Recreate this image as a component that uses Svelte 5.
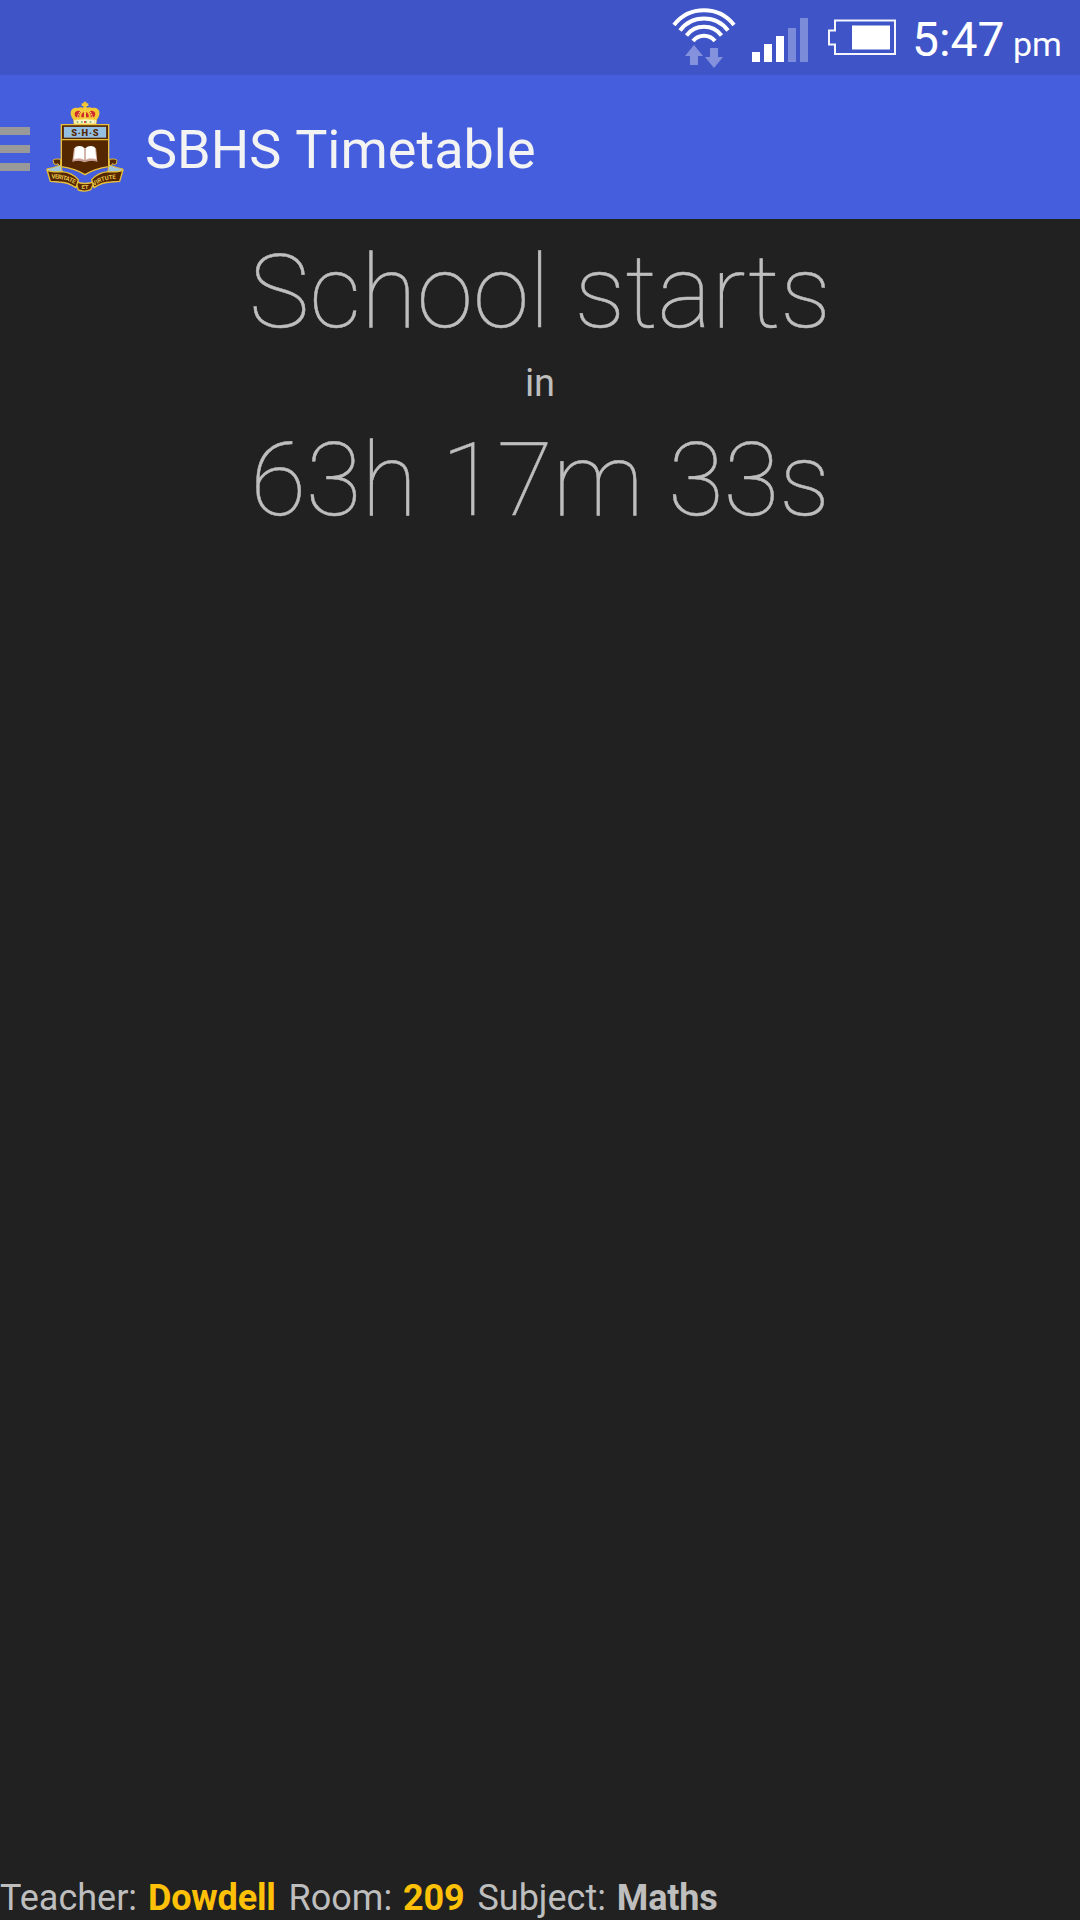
<script>
  const signal = [10, 18, 26, 34, 44];
  const details = [
    { label: 'Teacher', value: 'Dowdell', changed: true },
    { label: 'Room', value: '209', changed: true },
    { label: 'Subject', value: 'Maths', changed: false }
  ];
</script>

<div class="screen">
  <div class="status">
    <svg class="wifi" width="64" height="64" viewBox="672 6 64 64">
      <g fill="none" stroke="#fff" stroke-width="4">
        <path d="M674 25A38 38 0 0 1 734 25" />
        <path d="M680 30.500A30 30 0 0 1 728 30.500" />
        <path d="M686.500 35.500A22 22 0 0 1 721.500 35.500" />
        <path d="M693 41A14 14 0 0 1 715 41" />
      </g>
      <path fill="#8491dd" d="M694 45L703 56H698V65H690V56H685ZM710 48H718V57H723L714 68L705 57H710Z" />
    </svg>
    <svg class="signal" width="56" height="44" viewBox="0 0 56 44">
      {#each signal as h, i}
        <rect x={i * 12} y={44 - h} width="8" height={h} fill={i < 3 ? '#fff' : '#7b8bda'} />
      {/each}
    </svg>
    <svg class="battery" width="68" height="36" viewBox="828 19 68 36">
      <path fill="none" stroke="#f4f5fd" stroke-width="2" d="M835 20.500H895V54H835V44.500H829V30.500H835Z" />
      <rect x="852" y="25.500" width="38" height="24" fill="#fff" />
    </svg>
    <span class="clock">5:47</span><span class="ampm">pm</span>
  </div>

  <header>
    <div class="menu"><i></i><i></i><i></i></div>
    <svg class="crest" width="80" height="94" viewBox="135 30 240 282">
      <!-- crown -->
      <path fill="#f3c832" d="M224 94C203 72 212 50 233 54Q242 50 249 53L251 48H245V40H251V35H259V40H265V48H259L261 53Q268 50 277 54C299 50 307 72 287 94Z" />
      <path fill="#cf2a2b" d="M228 82C220 71 225 62 236 62L243 65Q236 74 238 82ZM282 82C290 71 285 62 274 62L267 65Q274 74 272 82ZM244 82Q242 72 252 66V82ZM266 82Q268 72 258 66V82Z" />
      <path fill="none" stroke="#fbe07a" stroke-width="4" stroke-dasharray="3 3" d="M233 86Q231 71 247 60M277 86Q279 71 263 60M255 56V86" />
      <path fill="#fff4c3" stroke="#f3c832" stroke-width="2" d="M221 90Q255 83 290 90L288 102H222Z" />
      <path fill="none" stroke="#5fa868" stroke-width="4" stroke-dasharray="5 8" d="M230 96H283" />
      <circle cx="255" cy="96" r="3" fill="#d42b31" />
      <!-- ribbon curls -->
      <g stroke="#e5bd34" stroke-width="3">
        <path fill="#552700" d="M159 211Q164 205 182 208V238L174 221Q168 226 162 221ZM351 211Q346 205 328 208V238L337 221Q343 226 349 221Z" />
        <path fill="#9fc6df" d="M183 225L158 233L140 237L145 246L187 247ZM327 225L352 233L369 237L364 246L323 247Z" />
      </g>
      <!-- shield -->
      <path fill="#552700" stroke="#eac13a" stroke-width="4" d="M184 104H326V230Q284 236 255 254Q226 236 184 230Z" />
      <rect x="191" y="110" width="128" height="34" fill="#94c0e4" stroke="#552700" stroke-width="2" />
      <path stroke="#eac13a" stroke-width="4" d="M184 149H326" />
      <text class="initials" x="254.500" y="137.500" text-anchor="middle" textLength="82">S·H·S</text>
      <!-- open book -->
      <path fill="#d9b6ab" d="M222 174L217 215Q240 209 254 217Q270 209 292 215L288 174Z" />
      <path fill="#fff" d="M226 171Q244 164 253 174V209Q239 202 222 207ZM257 174Q267 164 284 171L289 207Q269 202 257 209Z" />
      <path fill="none" stroke="#a98274" stroke-width="2" d="M255 175V213M219 212Q240 206 254 214Q268 206 290 212" />
      <!-- motto ribbon -->
      <g fill="#552700" stroke="#e8bf39" stroke-width="4" stroke-linejoin="round">
        <path d="M227 275Q255 286 283 275L272 299Q255 307 235 300Z" />
        <path d="M141 240Q153 248 187 245Q216 248 235 269L228 293Q205 277 177 276L151 274Z" />
        <path d="M369 240Q357 248 323 245Q294 248 275 269L282 293Q305 277 333 276L359 274Z" />
      </g>
      <path id="motto-left" fill="none" d="M154 266Q200 264 232 288" />
      <path id="motto-right" fill="none" d="M282 288Q311 266 358 266" />
      <text class="motto"><textPath href="#motto-left" textLength="72">VERITATE</textPath></text>
      <text class="motto" x="255" y="298" text-anchor="middle">ET</text>
      <text class="motto"><textPath href="#motto-right" textLength="70">VIRTUTE</textPath></text>
    </svg>
    <h1>SBHS Timetable</h1>
  </header>

  <main>
    <div class="big event">School starts</div>
    <div class="in">in</div>
    <div class="big countdown">63h 17m 33s</div>
  </main>

  <footer>
    {#each details as d}
      <span class="item">{d.label}: <b class:changed={d.changed}>{d.value}</b></span>
    {/each}
  </footer>
</div>

<style>
  .screen {
    width: 1080px;
    height: 1920px;
    display: flex;
    flex-direction: column;
    overflow: hidden;
    background: #212121;
    color: #bebebe;
    font-family: Roboto, sans-serif;
  }
  svg {
    display: block;
    flex: none;
  }
  .status {
    height: 75px;
    flex: none;
    display: flex;
    align-items: flex-start;
    justify-content: flex-end;
    padding-right: 17px;
    box-sizing: border-box;
    background: #3f54c6;
    color: #fff;
    white-space: nowrap;
  }
  .wifi {
    margin: 6px 16px 0 0;
  }
  .signal {
    margin: 18px 20px 0 0;
  }
  .battery {
    margin: 19px 16px 0 0;
  }
  .clock {
    font-size: 48px;
    line-height: 56px;
    margin-top: 12px;
    width: 101px;
  }
  .ampm {
    font-size: 34px;
    line-height: 42px;
    margin-top: 23px;
    width: 50px;
  }
  header {
    height: 144px;
    flex: none;
    display: flex;
    align-items: center;
    background: #455ede;
  }
  .menu {
    width: 30px;
    display: flex;
    flex-direction: column;
    gap: 10px;
    padding-top: 4px;
  }
  .menu i {
    height: 8px;
    background: #999;
  }
  .crest {
    margin-left: 15px;
  }
  .initials {
    font: 900 28px Roboto, sans-serif;
    fill: #552700;
  }
  .motto {
    font: bold 18px Roboto, sans-serif;
    fill: #e8c64c;
  }
  h1 {
    margin: 5px 0 0 20px;
    font-size: 54px;
    line-height: 64px;
    font-weight: 400;
    word-spacing: 1.5px;
    color: #f3f3f3;
    white-space: nowrap;
  }
  main {
    flex: 1;
    display: flex;
    flex-direction: column;
    align-items: center;
    padding-top: 13px;
    white-space: nowrap;
  }
  .big {
    font-size: 102px;
    line-height: 120px;
    font-weight: 100;
    -webkit-text-stroke: 0.5px #bebebe;
  }
  .countdown {
    letter-spacing: -0.2px;
  }
  .in {
    font-size: 38px;
    line-height: 46px;
    margin: 8px 0 14px;
  }
  footer {
    display: flex;
    gap: 13px;
    height: 45px;
    font-size: 36px;
    line-height: 46px;
    white-space: nowrap;
  }
  b {
    margin-left: 2px;
    font-weight: 700;
    letter-spacing: -0.2px;
  }
  .changed {
    color: #ffc107;
  }
</style>
